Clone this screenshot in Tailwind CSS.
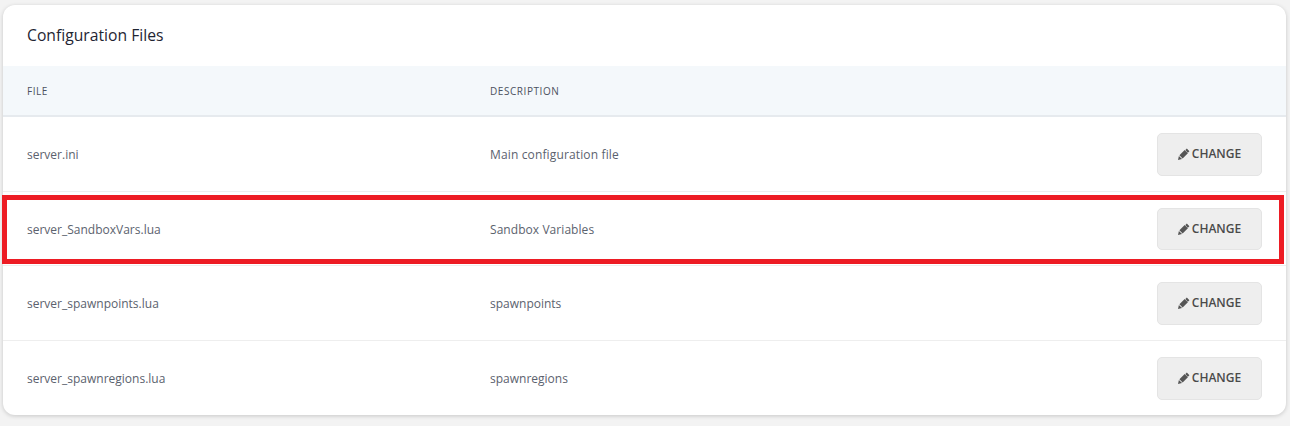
<!DOCTYPE html>
<html lang="en">
<head>
    <meta charset="UTF-8">
    <title>Configuration Files</title>
    <script src="https://cdn.jsdelivr.net/npm/@tailwindcss/browser@4"></script>
</head>
<body class="bg-[#f3f3f3] h-[426px] overflow-hidden font-['Open_Sans',sans-serif]">
    <div class="relative pt-[5px] pl-[3px] pr-[4px]">
        <div class="bg-white rounded-[12px] shadow-[0_1px_4px_rgba(0,0,0,0.18)] h-[410px] overflow-hidden">
            <div class="h-[61px] pl-[24px] flex items-center">
                <h2 class="text-[15.7px] font-medium text-[#1f2533]">Configuration Files</h2>
            </div>

            <div class="h-[51px] pt-[2px] bg-[#f4f8fb] border-b-2 border-[#e6eaee] flex items-center pl-[24px] text-[10px] font-normal text-[#4c5260] uppercase tracking-[0.56px]">
                <div class="w-[463px]">File</div>
                <div>Description</div>
            </div>

            <div class="h-[75px] border-b border-[#eeeeee] flex items-center pl-[24px] pr-[24px] text-[12px] text-[#5b626e]">
                <div class="w-[463px] pt-[2px]">server.ini</div>
                <div class="flex-1 pt-[2px] tracking-[0.14px]">Main configuration file</div>
                <button class="w-[105px] h-[43px] bg-[#eeeeee] border border-[#e4e4e4] rounded-[5px] flex items-center justify-center gap-[2px] text-[12px] font-semibold text-[#4a4a4a]">
                    <svg class="w-[12px] h-[12px]" viewBox="0 0 16 16" fill="#555"><path d="M11.8 0.8l3.4 3.4-2 2-3.4-3.4zM8.9 2.8l4.3 4.3-7 7-4.3-4.3zM1.2 10.6l4.2 4.2-5.4 1.2z"/></svg>
                    CHANGE
                </button>
            </div>
            <div class="h-[74px] border-b border-[#eeeeee] flex items-center pl-[24px] pr-[24px] text-[12px] text-[#5b626e]">
                <div class="w-[463px] pt-[2px]">server_SandboxVars.lua</div>
                <div class="flex-1 pt-[2px] tracking-[0.06px]">Sandbox Variables</div>
                <button class="w-[105px] h-[42px] bg-[#eeeeee] border border-[#e4e4e4] rounded-[5px] flex items-center justify-center gap-[2px] text-[12px] font-semibold text-[#4a4a4a]">
                    <svg class="w-[12px] h-[12px]" viewBox="0 0 16 16" fill="#555"><path d="M11.8 0.8l3.4 3.4-2 2-3.4-3.4zM8.9 2.8l4.3 4.3-7 7-4.3-4.3zM1.2 10.6l4.2 4.2-5.4 1.2z"/></svg>
                    CHANGE
                </button>
            </div>
            <div class="h-[75px] border-b border-[#eeeeee] flex items-center pl-[24px] pr-[24px] text-[12px] text-[#5b626e]">
                <div class="w-[463px] pt-[2px]">server_spawnpoints.lua</div>
                <div class="flex-1 pt-[2px]">spawnpoints</div>
                <button class="w-[105px] h-[43px] bg-[#eeeeee] border border-[#e4e4e4] rounded-[5px] flex items-center justify-center gap-[2px] text-[12px] font-semibold text-[#4a4a4a]">
                    <svg class="w-[12px] h-[12px]" viewBox="0 0 16 16" fill="#555"><path d="M11.8 0.8l3.4 3.4-2 2-3.4-3.4zM8.9 2.8l4.3 4.3-7 7-4.3-4.3zM1.2 10.6l4.2 4.2-5.4 1.2z"/></svg>
                    CHANGE
                </button>
            </div>
            <div class="h-[74px] flex items-center pl-[24px] pr-[24px] text-[12px] text-[#5b626e]">
                <div class="w-[463px] pt-[2px]">server_spawnregions.lua</div>
                <div class="flex-1 pt-[2px]">spawnregions</div>
                <button class="w-[105px] h-[43px] bg-[#eeeeee] border border-[#e4e4e4] rounded-[5px] flex items-center justify-center gap-[2px] text-[12px] font-semibold text-[#4a4a4a]">
                    <svg class="w-[12px] h-[12px]" viewBox="0 0 16 16" fill="#555"><path d="M11.8 0.8l3.4 3.4-2 2-3.4-3.4zM8.9 2.8l4.3 4.3-7 7-4.3-4.3zM1.2 10.6l4.2 4.2-5.4 1.2z"/></svg>
                    CHANGE
                </button>
            </div>
        </div>

        <!-- red highlight drawn over the second row -->
        <div class="absolute left-[2px] top-[195px] w-[1282px] h-[69px] border-[5px] border-[#ed1c24]"></div>
    </div>
</body>
</html>
